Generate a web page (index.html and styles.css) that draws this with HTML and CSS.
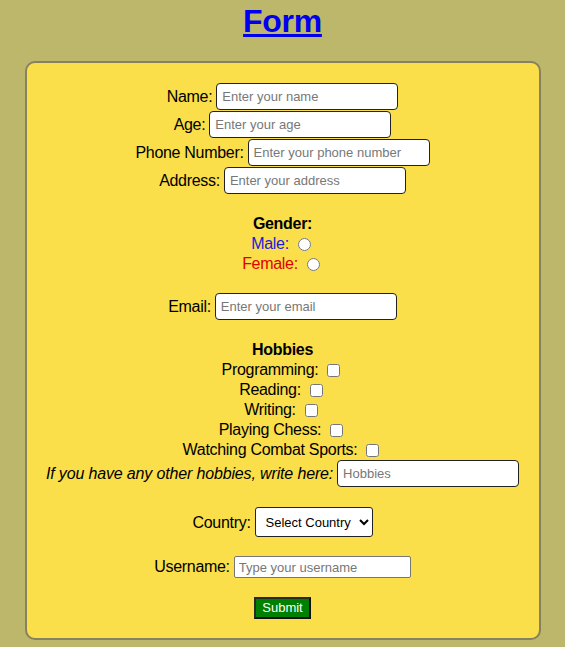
FILE: index.html
```html
<!DOCTYPE html>
<html lang="en">
<head>
<meta charset="utf-8">
<title>Form</title>
<link rel="stylesheet" href="styles.css">
</head>
<body>
<h1 class="title"><a href="#" class="title-link">Form</a></h1>
<form class="card">
  <div class="group">
    <div class="row"><label for="name">Name:</label><input class="field" id="name" type="text" placeholder="Enter your name"></div>
    <div class="row"><label for="age">Age:</label><input class="field" id="age" type="text" placeholder="Enter your age"></div>
    <div class="row"><label for="phone">Phone Number:</label><input class="field" id="phone" type="text" placeholder="Enter your phone number"></div>
    <div class="row"><label for="address">Address:</label><input class="field" id="address" type="text" placeholder="Enter your address"></div>
  </div>

  <div class="group">
    <div class="line heading">Gender:</div>
    <div class="line"><label class="male" for="male">Male:</label><input class="radio" id="male" type="radio" name="gender"></div>
    <div class="line"><label class="female" for="female">Female:</label><input class="radio" id="female" type="radio" name="gender"></div>
  </div>

  <div class="group">
    <div class="row"><label for="email">Email:</label><input class="field" id="email" type="email" placeholder="Enter your email"></div>
  </div>

  <div class="group">
    <div class="line heading">Hobbies</div>
    <div class="line"><label for="h1">Programming:</label><input class="check" id="h1" type="checkbox"></div>
    <div class="line"><label for="h2">Reading:</label><input class="check" id="h2" type="checkbox"></div>
    <div class="line"><label for="h3">Writing:</label><input class="check" id="h3" type="checkbox"></div>
    <div class="line"><label for="h4">Playing Chess:</label><input class="check" id="h4" type="checkbox"></div>
    <div class="line"><label for="h5">Watching Combat Sports:</label><input class="check" id="h5" type="checkbox"></div>
    <div class="row"><label class="other" for="other">If you have any other hobbies, write here:</label><input class="field" id="other" type="text" placeholder="Hobbies"></div>
  </div>

  <div class="group">
    <div class="row row-select"><label for="country">Country:</label>
      <select class="select" id="country">
        <option>Select Country</option>
        <option>India</option>
        <option>USA</option>
        <option>UK</option>
      </select>
    </div>
  </div>

  <div class="group">
    <div class="row row-user"><label for="username">Username:</label><input class="plain" id="username" type="text" placeholder="Type your username"></div>
  </div>

  <div class="group">
    <div class="row row-submit"><button class="submit" type="submit">Submit</button></div>
  </div>
</form>
</body>
</html>
```

FILE: styles.css
```css
html, body {
  margin: 0;
  padding: 0;
}

body {
  background: #bdb76b;
  font-family: "Liberation Sans", Arial, sans-serif;
  font-size: 16px;
  color: #000;
  height: 647px;
  overflow: hidden;
}

.title {
  margin: 3px 0 21px;
  text-align: center;
  font-size: 32px;
  font-weight: bold;
  line-height: 37px;
  letter-spacing: -0.3px;
}

.title-link {
  color: #0000ee;
  text-decoration: underline;
}

.card {
  box-sizing: border-box;
  width: 516px;
  margin: 0 auto;
  background: #fadf4a;
  border: 2px solid #86815f;
  border-radius: 10px;
  padding: 20px 0 19px;
  display: flex;
  flex-direction: column;
  gap: 19px;
}

.group {
  display: flex;
  flex-direction: column;
}

.row {
  height: 28px;
  display: flex;
  justify-content: center;
  align-items: flex-start;
  gap: 4px;
}

.row label,
.line label,
.heading {
  letter-spacing: -0.3px;
}

.row label {
  line-height: 27px;
}

.line {
  height: 20px;
  display: flex;
  justify-content: center;
  align-items: center;
  gap: 4px;
  line-height: 20px;
}

.heading {
  font-weight: bold;
}

.male {
  color: #1a1ae0;
}

.female {
  color: #e00000;
}

.row label.other {
  font-style: italic;
  letter-spacing: -0.15px;
}

.field {
  box-sizing: border-box;
  width: 182px;
  height: 27px;
  margin: 0;
  padding: 0 5px;
  border: 1px solid #222;
  border-radius: 4px;
  background: #fff;
  font-family: "Liberation Sans", Arial, sans-serif;
  font-size: 13px;
  color: #000;
}

.field::placeholder,
.plain::placeholder {
  color: #777;
}

.radio {
  width: 13px;
  height: 13px;
  margin: 0 3px 0 5px;
}

.check {
  width: 13px;
  height: 13px;
  margin: 0 3px 0 5px;
}

.row-select {
  height: 30px;
  align-items: center;
}

.select {
  box-sizing: border-box;
  width: 118px;
  height: 30px;
  margin: 0;
  padding: 0 4px 0 6px;
  border: 1px solid #222;
  border-radius: 3px;
  background: #fff;
  font-family: "Liberation Sans", Arial, sans-serif;
  font-size: 13px;
  color: #000;
}

.row-user {
  height: 22px;
  align-items: center;
}

.row-user label {
  line-height: 22px;
}

.plain {
  box-sizing: border-box;
  width: 177px;
  height: 22px;
  margin: 0;
  padding: 1px 4px;
  border: 1px solid #767676;
  border-radius: 2px;
  background: #fff;
  font-family: "Liberation Sans", Arial, sans-serif;
  font-size: 13px;
}

.row-submit {
  height: 22px;
}

.submit {
  box-sizing: border-box;
  width: 57px;
  height: 22px;
  margin: 0;
  padding: 0;
  background: #008000;
  color: #fff;
  border: 2px solid;
  border-color: #2a2a2a #111 #111 #2a2a2a;
  font-family: "Liberation Sans", Arial, sans-serif;
  font-size: 13px;
  line-height: 18px;
}
```
